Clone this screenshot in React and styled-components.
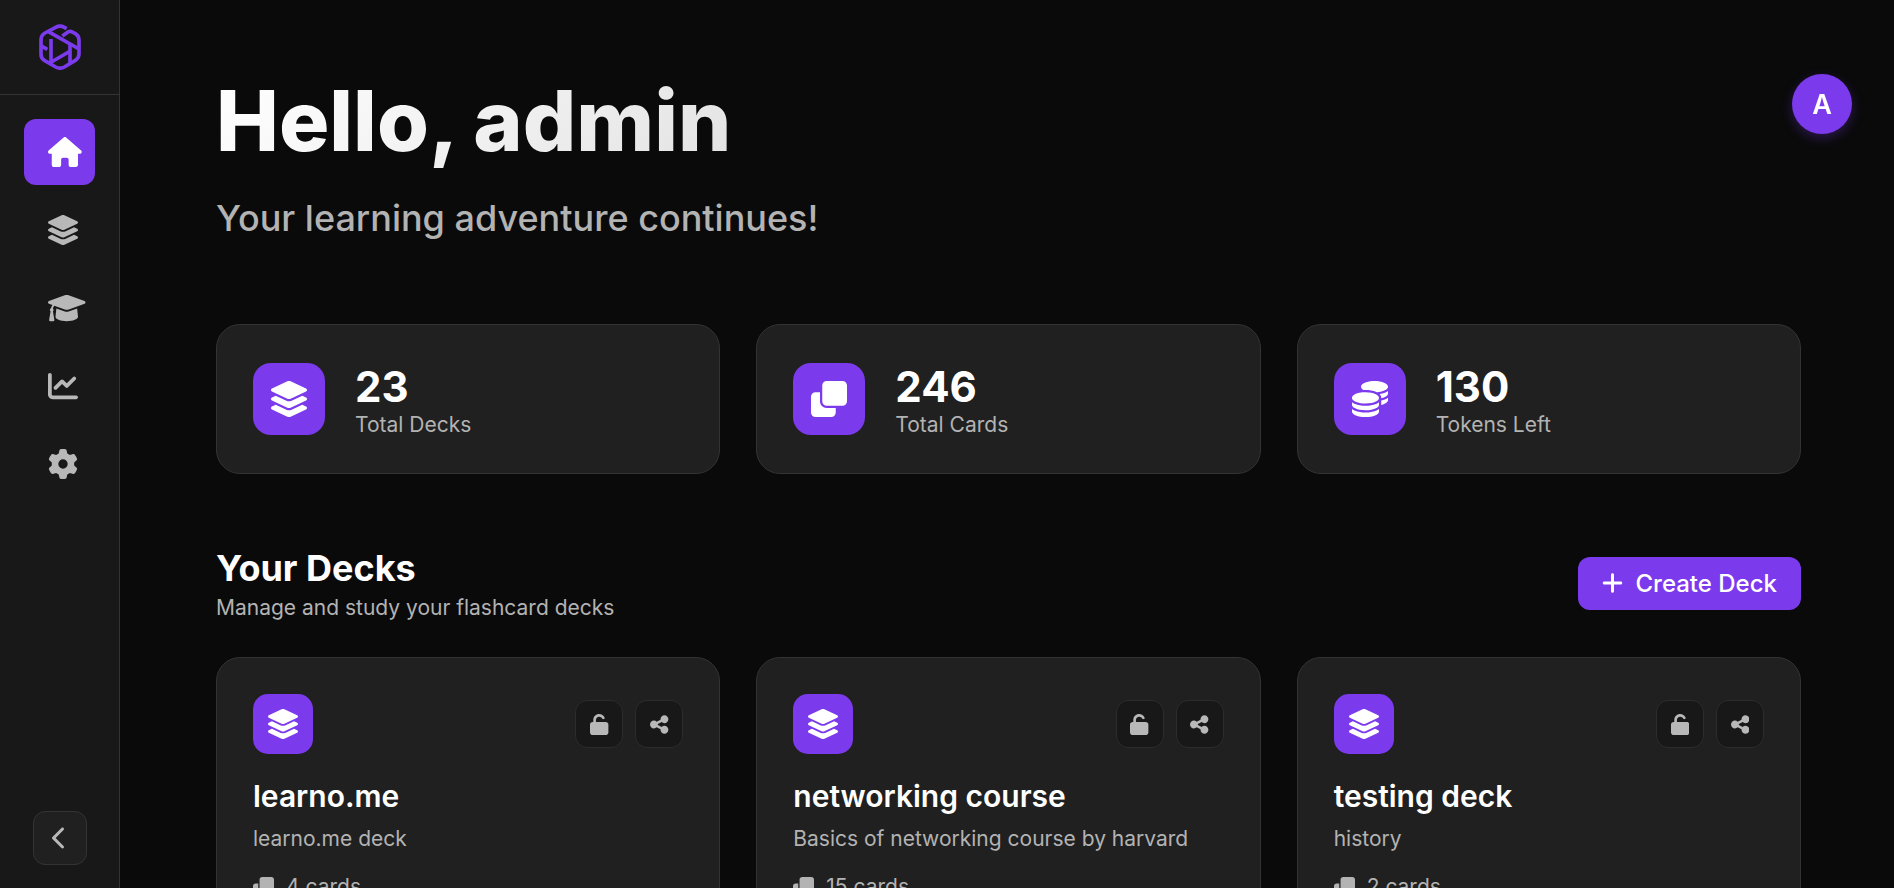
import React from "react";
import styled, { createGlobalStyle, css } from "styled-components";
import { IconContext } from "react-icons";
import {
  FaHouse,
  FaChartLine,
  FaGear,
  FaChevronLeft,
  FaCoins,
  FaPlus,
  FaUnlock,
  FaShareNodes
} from "react-icons/fa6";

const GlobalStyle = createGlobalStyle`
  * {
    box-sizing: border-box;
  }

  body {
    margin: 0;
    background: #0a0a0a;
    color: #ffffff;
    font-family: Inter, "Liberation Sans", sans-serif;
    font-size: 21px;
  }

  h1, h2, h3, p {
    margin: 0;
  }

  button {
    font-family: inherit;
    cursor: pointer;
  }
`;

const iconSize = css`
  svg {
    display: block;
    flex: none;
    width: auto;
    height: ${props => props.$icon}px;
  }
`;

const Layout = styled.div`
  display: flex;
  height: 100vh;
`;

const Sidebar = styled.aside`
  display: flex;
  flex-direction: column;
  flex: 0 0 120px;
  background: #181818;
  border-right: 1px solid #333333;
`;

const Brand = styled.a`
  display: flex;
  align-items: center;
  justify-content: center;
  height: 95px;
  border-bottom: 1px solid #333333;
`;

const Nav = styled.nav`
  display: flex;
  flex-direction: column;
  flex: 1;
  gap: 12px;
  padding: 24px;
`;

const NavLink = styled.a`
  ${iconSize}
  display: flex;
  align-items: center;
  height: 66px;
  padding-left: 24px;
  border-radius: 12px;
  color: ${props => (props.$active ? "#ffffff" : "#b8b8b8")};
  background: ${props => (props.$active ? "#7c3aed" : "transparent")};
`;

const Collapse = styled.button`
  ${iconSize}
  display: flex;
  align-items: center;
  justify-content: center;
  align-self: center;
  width: 54px;
  height: 54px;
  margin-bottom: 23px;
  padding: 0;
  color: #b8b8b8;
  background: #202020;
  border: 1px solid #333333;
  border-radius: 12px;
`;

const Main = styled.main`
  flex: 1;
  min-width: 0;
  padding: 72px 93px 72px 96px;
  overflow-y: auto;
  scrollbar-width: none;
`;

const Avatar = styled.button`
  position: fixed;
  top: 74px;
  right: 42px;
  width: 60px;
  height: 60px;
  padding: 0;
  color: #ffffff;
  background: #7c3aed;
  border: 0;
  border-radius: 50%;
  box-shadow: 0 4px 12px rgba(124, 58, 237, 0.3);
  font-size: 27px;
  font-weight: 600;
`;

const Greeting = styled.h1`
  width: fit-content;
  font-size: 84px;
  font-weight: 800;
  line-height: 98px;
  background: linear-gradient(135deg, #ffffff 0%, #e3e3e3 100%);
  background-clip: text;
  -webkit-text-fill-color: transparent;
`;

const Tagline = styled.p`
  margin-top: 22px;
  color: #b3b3b3;
  font-size: 36px;
  font-weight: 500;
  line-height: 52px;
`;

const Grid = styled.div`
  display: grid;
  grid-template-columns: repeat(3, 1fr);
  gap: 36px;
`;

const Stats = styled(Grid)`
  margin: 80px 0 69px;
`;

const Card = styled.article`
  padding: 36px;
  background: #202020;
  border: 1px solid #333333;
  border-radius: 24px;
`;

const StatCard = styled(Card)`
  display: flex;
  align-items: center;
  gap: 30px;
  height: 150px;
`;

const Tile = styled.div`
  ${iconSize}
  display: flex;
  align-items: center;
  justify-content: center;
  flex: none;
  width: ${props => props.$size}px;
  height: ${props => props.$size}px;
  background: #7c3aed;
  border-radius: ${props => props.$radius}px;
`;

const StatValue = styled.p`
  font-size: 42px;
  font-weight: 700;
  line-height: 52px;
`;

const Muted = styled.p`
  color: #b3b3b3;
  line-height: ${props => props.$line}px;
`;

const SectionHeader = styled.header`
  display: flex;
  align-items: center;
  justify-content: space-between;
  margin-bottom: 34px;
`;

const SectionTitle = styled.h2`
  font-size: 36px;
  font-weight: 700;
  line-height: 50px;
`;

const CreateButton = styled.button`
  ${iconSize}
  display: flex;
  align-items: center;
  gap: 12px;
  height: 53px;
  padding: 0 24px;
  color: #ffffff;
  background: #7c3aed;
  border: 0;
  border-radius: 12px;
  font-size: 24px;
  font-weight: 500;
`;

const DeckTop = styled.div`
  display: flex;
  align-items: center;
  justify-content: space-between;
`;

const DeckActions = styled.div`
  display: flex;
  gap: 12px;
`;

const ActionButton = styled.button`
  ${iconSize}
  display: flex;
  align-items: center;
  justify-content: center;
  width: 48px;
  height: 48px;
  padding: 0;
  color: #b8b8b8;
  background: #181818;
  border: 1px solid #2c2c2c;
  border-radius: 12px;
`;

const DeckTitle = styled.h3`
  margin: 24px 0 8px;
  font-size: 30px;
  font-weight: 600;
  line-height: 36px;
`;

const DeckMeta = styled.div`
  ${iconSize}
  display: flex;
  align-items: center;
  gap: 12px;
  margin-top: 14px;
  color: #b3b3b3;
  line-height: 34px;
`;

const Logo = () => (
  <svg width="42" height="46" viewBox="117 73 126 138" fill="none" stroke="#7c3aed" strokeWidth="11">
    <path d="M200 87 L193 83 Q180 76 167 83 L135 100 Q123 107 123 120 V164 Q123 176 133 182 L167 202 Q180 209 193 202 L226 182 Q237 175 237 163 V121 Q237 108 226 102 L216 97 Q210 93 204 97 L187 109" />
    <path d="M144 95 L237 148" />
    <path d="M153 118 V190" />
    <path d="M210 134 V194" />
    <path d="M149 190 L211 154" />
    <path d="M122 138 L142 149" />
  </svg>
);

// two solid sheets, the pack only has the outlined one
const CloneIcon = () => (
  <svg viewBox="0 0 512 512" fill="currentColor">
    <path d="M0 224C0 188.7 28.7 160 64 160H128V288C128 341 171 384 224 384H352V448C352 483.3 323.3 512 288 512H64C28.7 512 0 483.3 0 448V224zM224 352C188.7 352 160 323.3 160 288V64C160 28.7 188.7 0 224 0H448C483.3 0 512 28.7 512 64V288C512 323.3 483.3 352 448 352H224z" />
  </svg>
);

const LayersIcon = () => (
  <svg viewBox="0 0 512 512" fill="currentColor">
    <path d="M232.5 5.2C247.4-1.7 264.6-1.7 279.5 5.2L498.1 106.2C506.6 110.1 512 118.6 512 128C512 137.3 506.6 145.8 498.1 149.8L279.5 250.8C264.6 257.7 247.4 257.7 232.5 250.8L13.9 149.8C5.4 145.8 0 137.3 0 128C0 118.6 5.4 110.1 13.9 106.2L232.5 5.2z" />
    <path d="M498.1 234.2C506.6 238.1 512 246.6 512 256C512 265.3 506.6 273.8 498.1 277.8L279.5 378.8C264.6 385.7 247.4 385.7 232.5 378.8L13.9 277.8C5.4 273.8 0 265.3 0 256C0 246.6 5.4 238.1 13.9 234.2L67.1 209.6L219.1 279.8C242.5 290.7 269.5 290.7 292.9 279.8L444.9 209.6L498.1 234.2z" />
    <path d="M292.9 407.8L444.9 337.6L498.1 362.2C506.6 366.1 512 374.6 512 384C512 393.3 506.6 401.8 498.1 405.8L279.5 506.8C264.6 513.7 247.4 513.7 232.5 506.8L13.9 405.8C5.4 401.8 0 393.3 0 384C0 374.6 5.4 366.1 13.9 362.2L67.1 337.6L219.1 407.8C242.5 418.7 269.5 418.7 292.9 407.8z" />
  </svg>
);

const CapIcon = () => (
  <svg viewBox="0 0 640 512" fill="currentColor">
    <path d="M623.1 136.9l-282.7-101.2c-13.7-4.9-29.7-4.9-43.4 0L16.1 136.9C6.4 140.4 0 149.6 0 160s6.4 19.6 16.1 23.1L76.1 204.6c-11.9 15.8-20.3 34.2-24.6 54C40.1 263.4 32 274.8 32 288c0 10 4.8 18.5 11.9 24.4l-24.8 149C17.5 471.1 25 480 34.9 480H93.1c9.9 0 17.4-8.9 15.8-18.6l-24.8-149C91.2 306.5 96 298 96 288c0-10.3-5.2-19-12.7-24.9c4.3-17.8 12.9-33.8 24.9-47l190.6 68.2c13.7 4.9 29.7 4.9 43.4 0l282.7-101.2C633.6 179.6 640 170.4 640 160S633.6 140.4 623.1 136.9z" />
    <path d="M352 314.4C341.7 318.1 330.9 320 320 320c-10.9 0-21.7-1.9-32-5.6L142.8 262.5L128 405.3C128 446.6 213.1 480 320 480c105.1 0 192-33.4 192-74.7l-14.8-142.9L352 314.4z" />
  </svg>
);

const links = [
  { label: "Home", icon: FaHouse, active: true },
  { label: "Decks", icon: LayersIcon },
  { label: "Study", icon: CapIcon },
  { label: "Statistics", icon: FaChartLine },
  { label: "Settings", icon: FaGear }
];

const stats = [
  { value: 23, label: "Total Decks", icon: LayersIcon },
  { value: 246, label: "Total Cards", icon: CloneIcon },
  { value: 130, label: "Tokens Left", icon: FaCoins }
];

const decks = [
  { title: "learno.me", description: "learno.me deck", cards: 4 },
  { title: "networking course", description: "Basics of networking course by harvard", cards: 15 },
  { title: "testing deck", description: "history", cards: 2 }
];

const Stat = ({ value, label, icon: Icon }) => (
  <StatCard>
    <Tile $size={72} $radius={18} $icon={36}>
      <Icon />
    </Tile>
    <div>
      <StatValue>{value}</StatValue>
      <Muted $line={24}>{label}</Muted>
    </div>
  </StatCard>
);

const Deck = ({ title, description, cards }) => (
  <Card>
    <DeckTop>
      <Tile $size={60} $radius={15} $icon={30}>
        <LayersIcon />
      </Tile>
      <DeckActions>
        <ActionButton $icon={21} aria-label="Change visibility">
          <FaUnlock />
        </ActionButton>
        <ActionButton $icon={21} aria-label="Share deck">
          <FaShareNodes />
        </ActionButton>
      </DeckActions>
    </DeckTop>
    <DeckTitle>{title}</DeckTitle>
    <Muted $line={34}>{description}</Muted>
    <DeckMeta $icon={21}>
      <CloneIcon />
      <span>{cards} cards</span>
    </DeckMeta>
  </Card>
);

// size "auto" drops the pack's square 1em box, so wide icons keep their own ratio
const iconDefaults = { size: "auto" };

const App = () => (
  <IconContext.Provider value={iconDefaults}>
    <GlobalStyle />
    <Layout>
      <Sidebar>
        <Brand href="#" aria-label="Dashboard">
          <Logo />
        </Brand>
        <Nav>
          {links.map(({ label, icon: Icon, active }) => (
            <NavLink key={label} href="#" aria-label={label} $active={active} $icon={30}>
              <Icon />
            </NavLink>
          ))}
        </Nav>
        <Collapse $icon={24} aria-label="Collapse sidebar">
          <FaChevronLeft />
        </Collapse>
      </Sidebar>
      <Main>
        <Greeting>Hello, admin</Greeting>
        <Tagline>Your learning adventure continues!</Tagline>
        <Stats>
          {stats.map(stat => (
            <Stat key={stat.label} {...stat} />
          ))}
        </Stats>
        <SectionHeader>
          <div>
            <SectionTitle>Your Decks</SectionTitle>
            <Muted $line={30}>Manage and study your flashcard decks</Muted>
          </div>
          <CreateButton $icon={24}>
            <FaPlus />
            Create Deck
          </CreateButton>
        </SectionHeader>
        <Grid>
          {decks.map(deck => (
            <Deck key={deck.title} {...deck} />
          ))}
        </Grid>
      </Main>
      <Avatar aria-label="Account">A</Avatar>
    </Layout>
  </IconContext.Provider>
);

export default App;
